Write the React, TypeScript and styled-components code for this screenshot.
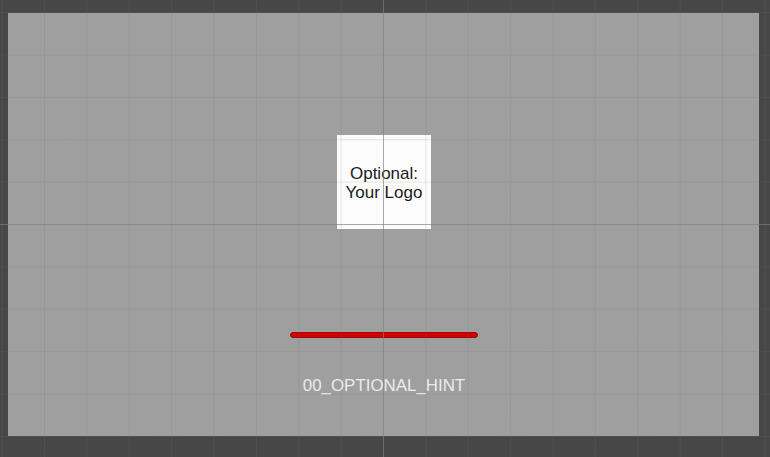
import React from "react";
import styled, { createGlobalStyle } from "styled-components";

const Global = createGlobalStyle`
  html, body {
    margin: 0;
    padding: 0;
    width: 770px;
    height: 457px;
    overflow: hidden;
    background: #474747;
    font-family: "Liberation Sans", Arial, sans-serif;
  }
  #root { width: 770px; height: 457px; }
`;

const Stage = styled.div`
  position: relative;
  width: 770px;
  height: 457px;
  box-sizing: border-box;
  padding: 13px 11px 21px 8px;
  display: flex;
`;

const Canvas = styled.div`
  flex: 1;
  background: #9f9f9f;
  display: flex;
  flex-direction: column;
  align-items: center;
`;

const LogoBox = styled.div`
  margin-top: 122px;
  margin-left: 1px;
  width: 94px;
  height: 94px;
  box-sizing: border-box;
  padding-top: 2px;
  background: rgba(255, 255, 255, 0.97);
  display: flex;
  align-items: center;
  justify-content: center;
  text-align: center;
  color: #1b1b1b;
  font-size: 17px;
  line-height: 19px;
`;

const ProgressBar = styled.div`
  margin-top: 103px;
  margin-left: 1px;
  width: 188px;
  height: 6px;
  box-sizing: border-box;
  border-radius: 3px;
  background: #d50000;
  border: 1px solid #9a0a0a;
`;

const Hint = styled.div`
  margin-top: 38px;
  margin-left: 1px;
  color: #ececec;
  font-size: 16.9px;
  line-height: 20px;
`;

const GridOverlay = styled.div`
  position: absolute;
  inset: 0;
  pointer-events: none;
  background-image:
    linear-gradient(to right, transparent 383px, rgba(128, 128, 128, 0.6) 383px, rgba(128, 128, 128, 0.6) 384px, transparent 384px),
    linear-gradient(to bottom, transparent 224px, rgba(128, 128, 128, 0.6) 224px, rgba(128, 128, 128, 0.6) 225px, transparent 225px),
    linear-gradient(to right, rgba(115, 115, 115, 0.18) 1px, transparent 1px),
    linear-gradient(to bottom, rgba(115, 115, 115, 0.18) 1px, transparent 1px);
  background-size: 100% 100%, 100% 100%, 42.375px 42.375px, 42.375px 42.375px;
  background-position: 0 0, 0 0, 1.625px 0, 0 12.125px;
  background-repeat: no-repeat, no-repeat, repeat, repeat;
`;

export default function App() {
  return (
    <>
      <Global />
      <Stage>
        <Canvas>
          <LogoBox>
            Optional:
            <br />
            Your Logo
          </LogoBox>
          <ProgressBar />
          <Hint>00_OPTIONAL_HINT</Hint>
        </Canvas>
        <GridOverlay />
      </Stage>
    </>
  );
}
